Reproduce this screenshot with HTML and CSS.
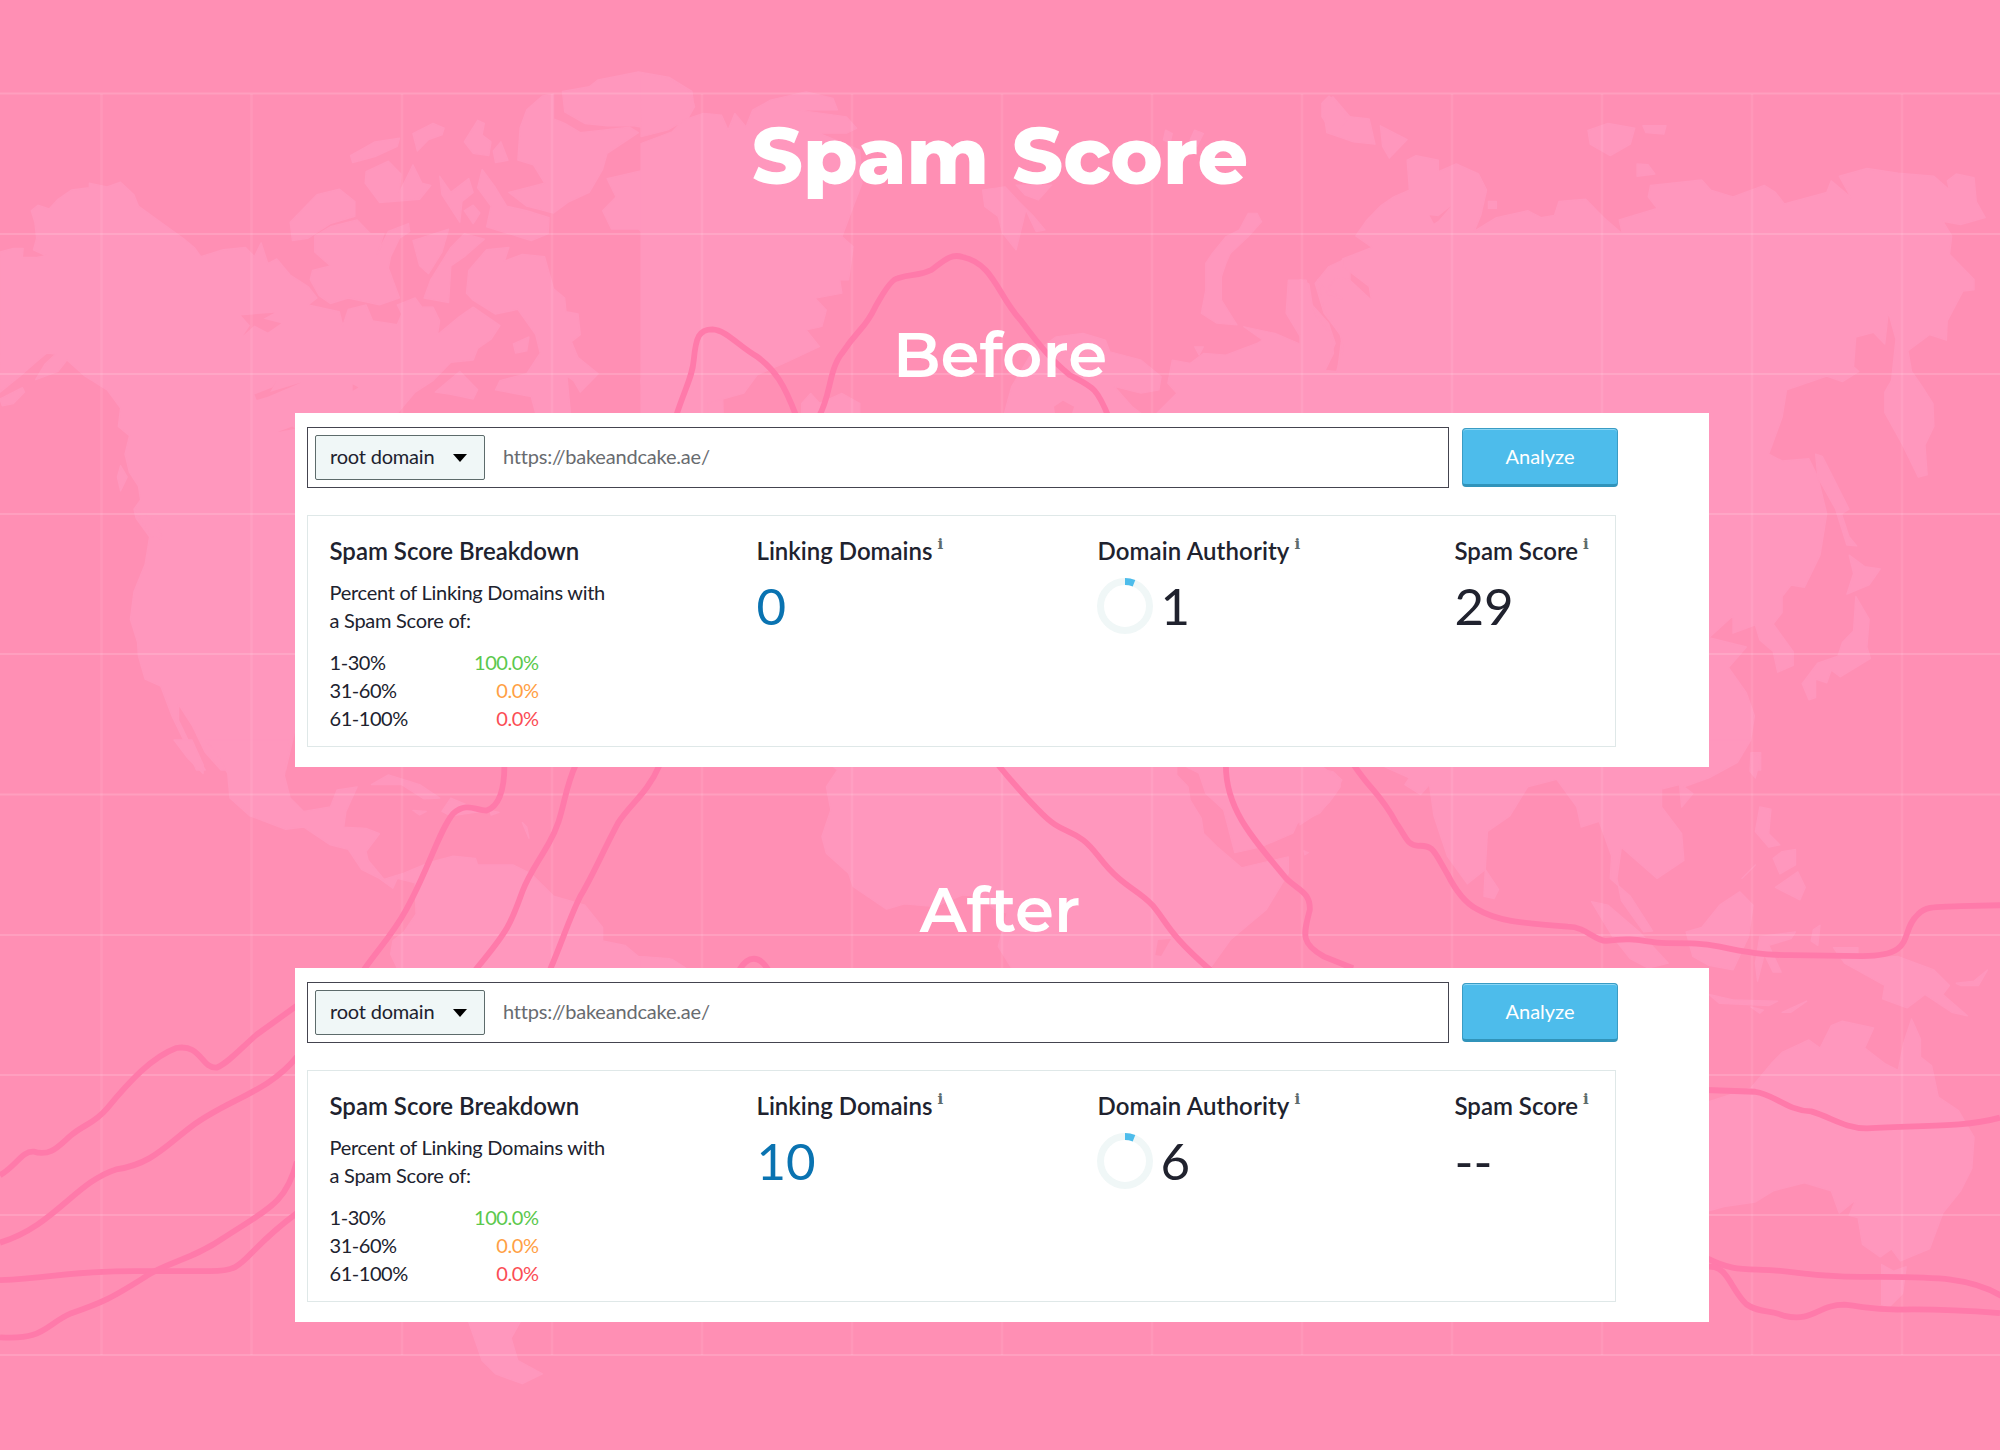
FILE: index.html
```html
<!DOCTYPE html>
<html lang="en">
<head>
<meta charset="utf-8">
<title>Spam Score</title>
<link rel="stylesheet" href="styles.css">
</head>
<body>
<svg class="map" viewBox="0 0 2000 1450" aria-hidden="true">
  <!-- North America and the Arctic islands -->
  <g class="land" transform="translate(0 50) scale(.4464 .4592)">
    <path d="M0 440L30 432 52 432 50 452 80 452 103 448 75 435 82 410 78 375 70 350 85 338 110 346 130 325 160 305 200 300 200 290 240 298 270 288 300 315 310 340 360 375 410 410 435 430 450 450 500 435 550 430 570 450 585 420 600 465 620 455 650 490 690 515 710 540 690 555 760 570 768 600 780 565 820 555 835 590 890 598 900 575 890 555 930 540 945 560 970 560 985 590 980 620 1030 580 1060 560 1090 580 1120 600 1100 630 1070 650 1060 675 1010 680 970 720 930 745 890 791 700 791 700 1500 661 1480 640 1568 495 1568 460 1530 430 1470 400 1425 400 1460 430 1520 460 1568 440 1568 410 1500 385 1450 360 1385 325 1370 310 1320 308 1290 292 1240 300 1180 325 1120 335 1060 305 1020 300 1000 315 980 310 950 290 920 280 880 290 840 265 820 270 780 240 740 190 710 150 675 130 700 80 718 100 685 125 662 105 660 80 680 45 710 0 745Z"/>
    <path d="M0 760L50 735 55 745 30 770 5 775ZM270 905L285 930 270 960 263 930ZM303 1000L350 1025 365 1065 340 1060Z"/>
    <path d="M650 375L710 315 760 303 795 330 795 362 740 378 690 410 655 415Z"/>
    <path d="M705 405L740 385 800 370 830 400 860 400 845 445 870 395 915 378 918 395 895 410 875 450 870 475 895 540 850 555 780 540 740 552 715 535 695 500 700 480 740 470 705 440Z"/>
    <path d="M785 230L840 200 895 192 890 210 840 232 790 245ZM820 265L870 242 898 270 895 310 925 250 945 290 965 295 940 325 850 332 818 290ZM925 182L970 160 995 170 990 185 960 195 935 220ZM1040 200L1070 153 1085 160 1080 185 1100 200 1095 230 1060 225ZM1105 220L1122 200 1138 240 1110 245ZM985 275L1010 310 1050 280 1060 310 1035 330 1030 375 990 315ZM1080 260L1110 300 1135 340 1180 350 1230 365 1228 400 1190 415 1090 385 1100 340 1070 300ZM1040 350L1060 338 1075 355 1060 378Z"/>
    <path d="M925 415L1005 390 990 440 960 487 940 470ZM1010 430L1040 400 1085 412 1040 450 1010 470 1005 550 950 540 965 500Z"/>
    <path d="M1045 530L1050 480 1090 435 1140 430 1130 460 1170 445 1220 450 1230 485 1240 520 1265 540 1268 570 1295 575 1300 620 1280 635 1295 670 1340 705 1300 745 1285 720 1270 710 1278 791 1200 791 1190 755 1110 740 1120 720 1180 705 1210 660 1200 620 1160 565 1110 575 1060 545ZM1150 640L1185 625 1180 655 1155 660ZM975 745L1030 700 1070 740 1060 760 1010 750Z"/>
    <path d="M1165 170L1180 130 1215 100 1240 96 1240 150 1265 160 1300 180 1410 168 1430 180 1360 225 1350 260 1320 310 1275 330 1240 355 1180 340 1140 310 1220 290 1195 250 1160 240Z"/>
    <path d="M1260 90L1320 80 1340 65 1430 48 1500 60 1550 90 1555 125 1500 155 1480 175 1420 165 1360 165 1310 160 1265 135Z"/>
    <path d="M1600 145L1568 145 1520 180 1450 225 1470 240 1440 262 1360 280 1380 320 1350 350 1370 390 1430 390 1465 420 1472 550 1490 570 1465 590 1495 625 1450 640 1490 660 1450 670 1435 720 1450 791 1620 791Z"/>
    <path class="sea" d="M540 578L615 572 590 585 630 595 600 615 570 600 545 622 560 600ZM570 750L610 735 620 720 605 745 675 724 600 755 575 762ZM622 832L655 820 661 825ZM790 728L803 735 790 742Z"/>
  </g>
  <!-- Greenland, Svalbard, Scandinavia -->
  <g class="land" transform="translate(650 50) scale(.4464 .3333)">
    <path d="M-20 70L40 85 90 130 100 170 85 205 40 240 -20 260ZM-20 280L50 245 75 210 120 190 160 195 175 240 190 190 215 230 230 180 270 150 350 125 410 145 420 180 330 180 440 200 463 235 440 250 380 250 470 300 475 400 455 470 430 560 455 590 445 690 425 690 430 730 370 745 395 780 385 830 350 840 380 890 300 940 240 975 210 1030 130 1060 130 1110 -20 1110Z"/>
    <path d="M340 1060L360 1030 380 1060 430 1030 470 1060 470 1110 340 1110Z"/>
    <path d="M745 420L795 410 830 460 860 500 885 540 865 545 842 480 820 600 790 550 780 500 750 470ZM820 405L900 405 870 450 840 435ZM1155 240L1170 250 1165 280 1150 270ZM1220 240L1240 250 1225 290 1210 270Z"/>
    <path d="M1340 490L1360 490 1370 515 1340 560 1300 610 1290 640 1280 680 1280 750 1315 825 1270 820 1235 790 1245 720 1245 640 1260 610 1290 560 1320 540Z"/>
    <path d="M790 1110L810 1010 850 920 910 860 970 850 1020 870 1030 905 1100 930 1145 980 1140 1020 1100 1030 1040 1010 1080 1070 1120 1110 1180 1030 1160 1000 1170 930 1210 940 1240 910 1290 915 1360 880 1372 870 1330 830 1400 850 1470 890 1425 790 1430 690 1470 690 1480 760 1520 820 1535 880 1510 960 1540 965 1550 860 1510 790 1490 700 1520 650 1568 620 1568 1110ZM1220 890L1240 890 1230 915ZM1505 160L1530 140 1568 200 1568 230 1530 250 1505 200Z"/>
    <path class="sea" d="M905 1070L925 1052 950 1070 940 1110 910 1110Z"/>
  </g>
  <!-- Asia -->
  <g class="land" transform="translate(1300 50) scale(.4464 .4592)">
    <path d="M0 500L20 510 30 570 70 620 75 660 55 700 82 700 97 650 90 620 55 570 40 500 65 535 95 542 62 520 80 495 110 500 160 545 155 515 95 470 95 455 162 430 125 405 150 370 180 340 210 320 245 305 240 240 260 230 310 240 310 265 350 248 400 270 418 305 405 360 390 395 440 365 510 350 540 365 570 360 580 330 640 325 680 365 722 400 715 370 800 345 780 320 785 295 900 283 920 305 970 320 1040 295 1065 310 1085 335 1180 310 1190 285 1235 322 1208 275 1270 258 1340 268 1420 275 1455 305 1450 285 1470 270 1510 278 1515 330 1535 365 1480 380 1440 373 1460 405 1455 445 1510 500 1510 522 1485 525 1450 590 1448 632 1410 620 1362 655 1370 700 1395 735 1418 770 1420 820 1400 860 1405 925 1385 930 1350 860 1310 790 1310 745 1325 720 1335 630 1318 570 1310 640 1285 615 1245 625 1240 690 1252 700 1215 722 1180 710 1090 740 1080 800 1050 880 1080 895 1140 890 1160 930 1180 1010 1165 1100 1130 1170 1100 1165 1080 1190 1080 1225 1060 1250 1105 1310 1105 1340 1070 1355 1060 1310 1030 1285 1020 1252 970 1270 970 1232 916 1280 1000 1300 960 1345 1000 1400 1018 1450 1010 1500 980 1540 940 1568 880 1568 880 791 0 791Z"/>
    <path d="M50 115L65 100 105 145 90 170 110 145 155 150 168 205 120 200 60 180ZM180 165L240 195 200 235 185 210ZM645 175L690 160 750 170 740 205 695 230 650 205ZM768 165L820 165 815 183 775 180ZM755 248L780 250 795 270 755 275ZM422 330L440 330 440 345 422 345Z"/>
    <path d="M1155 880L1170 885 1230 1000 1213 1010 1230 1060 1247 1080 1225 1078 1200 1000 1160 930ZM1230 1100L1265 1125 1300 1130 1275 1165 1225 1185 1240 1140ZM1245 1190L1275 1240 1270 1300 1278 1325 1210 1365 1190 1350 1180 1378 1155 1370 1155 1410 1140 1415 1125 1380 1160 1335 1205 1320 1215 1290 1240 1265ZM1010 1530L1032 1530 1032 1568 1010 1568Z"/>
    <path class="sea" d="M290 360L310 362 338 340 310 372 300 378Z"/>
  </g>
  <!-- Central and South America -->
  <g class="land" transform="translate(0 740) scale(.4464)">
    <path d="M460 0L485 30 510 75 515 130 560 170 640 200 680 195 740 235 780 245 810 290 850 310 880 332 890 310 930 320 932 390 905 430 880 450 875 480 890 511 1530 511 1500 490 1430 485 1400 460 1350 450 1350 420 1310 370 1240 350 1190 300 1150 280 1070 280 1065 265 1015 260 960 275 905 298 860 312 825 270 820 250 850 210 820 198 770 195 775 160 800 105 755 112 740 150 680 160 650 130 637 80 650 0ZM390 0L430 0 455 55 455 75 420 40Z"/>
    <path d="M832 100L870 78 940 100 985 130 950 132 900 100ZM925 158L955 160 940 168ZM990 160L1010 130 1080 160 1010 170ZM1098 158L1118 162 1100 168ZM1170 185L1180 195 1185 220ZM1050 1304L1165 1304 1145 1340 1160 1390 1215 1420 1170 1442 1110 1420 1080 1390Z"/>
  </g>
  <!-- Africa and Arabia -->
  <g class="land" transform="translate(650 750) scale(.4464 .3333)">
    <path d="M410 50L420 60 395 110 405 180 385 260 395 310 445 370 455 410 530 478 570 462 640 470 700 435 740 440 770 475 800 490 780 590 810 654 1255 654 1300 570 1380 480 1430 370 1430 320 1325 353 1270 290 1240 250 1235 205 1210 150 1205 110 1180 75 1180 50ZM1200 50L1230 70 1245 130 1285 180 1310 308 1370 290 1440 250 1450 220 1500 190 1530 140 1550 90 1530 65 1480 50ZM-20 620L50 628 80 654 -20 654ZM1465 302L1475 308 1467 315Z"/>
    <path class="sea" d="M1138 570L1167 567 1145 618 1132 615Z"/>
  </g>
  <!-- South Asia and Oceania -->
  <g class="land" transform="translate(1300 740) scale(.4464)">
    <path d="M50 60L90 90 90 105 65 140 30 170 0 190 0 60ZM190 60L245 85 235 100 270 122 290 100 300 170 330 260 375 322 415 290 420 205 470 170 510 105 575 88 620 150 630 195 670 182 698 260 695 310 740 350 790 428 770 430 720 360 710 310 720 240 800 310 860 270 855 210 810 150 810 110 850 100 855 150 880 120 860 105 916 85 980 50 1010 0 900 0 900 60Z"/>
    <path d="M415 290L445 335 435 355 412 350ZM653 362L690 370 760 430 825 500 780 511 740 490 700 440ZM865 430L900 420 940 370 985 340 1015 370 1005 440 970 515 916 505 880 485ZM1030 150L1055 155 1050 210 1075 235 1050 240 1020 205ZM1010 30L1032 40 1020 85 1008 70ZM1060 265L1080 250 1110 245 1110 280 1075 300ZM1065 330L1115 295 1132 330 1120 358ZM990 310L1020 280 1000 300ZM1030 440L1110 430 1100 445 1050 460 1078 520 1060 520 1040 480 1025 540 1020 500ZM1150 425L1165 415 1160 460 1145 450ZM1195 465L1250 465 1250 490 1340 485 1420 515 1455 550 1440 570 1495 618 1460 610 1400 570 1360 600 1305 580 1310 550 1220 500ZM1470 545L1510 540 1540 515 1520 550 1480 550ZM916 570L970 582 1070 585 1050 595 940 590ZM1080 610L1135 585 1100 610ZM1010 598L1038 605 1030 612Z"/>
    <path d="M916 810L1010 780 1060 720 1080 700 1140 672 1165 690 1190 640 1215 630 1285 645 1265 690 1310 725 1340 740 1352 680 1370 625 1390 670 1390 710 1415 730 1430 800 1475 830 1510 890 1505 960 1480 1010 1440 1060 1410 1140 1345 1167 1325 1140 1300 1158 1260 1130 1250 1070 1230 1065 1245 1030 1208 1060 1190 1010 1130 992 1060 1010 1020 1035 950 1045 916 1055ZM1303 1175L1330 1190 1358 1180 1350 1240 1320 1270 1303 1265Z"/>
  </g>
  <path class="grid" d="M0 93.5H2000M0 234H2000M0 374H2000M0 514H2000M0 654H2000M0 794.500H2000M0 935H2000M0 1075H2000M0 1215H2000M0 1355H2000"/>
  <path class="grid grid-v" d="M101.500 94V1355M251.500 94V1355M402 94V1355M552 94V1355M702 94V1355M852 94V1355M1002 94V1355M1152 94V1355M1302 94V1355M1452 94V1355M1602 94V1355M1752 94V1355M1902 94V1355"/>
  <!-- trend lines -->
  <g class="trend" transform="translate(650 50) scale(.4464 .3333)">
    <path d="M58 1100C80 1010 95 980 98 930C103 860 110 838 140 838C170 840 200 890 240 920C280 960 300 1000 328 1100"/>
    <path d="M378 1100C405 1040 400 960 430 910C470 830 480 840 505 770Q540 685 555 685C590 670 600 680 630 660C660 630 675 610 700 621C770 640 780 740 830 810C880 900 900 930 940 975C990 1010 1000 1010 1027 1100"/>
  </g>
  <g class="trend" transform="translate(0 740) scale(.4464)">
    <path d="M1130 55C1130 120 1115 150 1090 158C1065 158 1045 138 1015 165C985 200 960 290 910 380C880 435 850 465 815 515"/>
    <path d="M1290 55C1260 120 1265 170 1230 230C1205 275 1185 300 1170 340C1145 410 1140 425 1065 515"/>
    <path d="M1478 55C1450 120 1415 140 1385 185C1350 250 1330 300 1300 350C1275 400 1260 450 1232 515"/>
    <path d="M0 975C35 955 50 920 75 922C115 935 135 905 160 885C190 860 210 860 240 825C290 765 340 710 395 690C450 680 450 735 485 734C510 725 540 690 575 660L665 595"/>
    <path d="M0 1126C120 1090 170 990 260 962C340 950 370 910 430 865C510 805 600 790 665 710"/>
    <path d="M0 1210C120 1206 140 1190 300 1190H470C560 1190 530 1160 665 1060"/>
    <path d="M0 1338C100 1345 100 1310 160 1284C230 1260 250 1250 320 1206C370 1170 430 1165 500 1116C600 1050 640 1040 665 945"/>
  </g>
  <g class="trend" transform="translate(650 750) scale(.4464 .3333)">
    <path d="M780 45C820 110 840 140 870 180C920 250 930 230 970 270C1000 300 1010 340 1050 385C1080 420 1100 430 1125 465C1160 520 1160 550 1255 660"/>
    <path d="M1290 45C1290 170 1340 250 1425 385C1450 420 1480 425 1478 480C1465 550 1455 580 1510 620L1575 655"/>
    <path d="M200 660C220 615 245 615 265 660"/>
  </g>
  <g class="trend" transform="translate(1300 740) scale(.4464)">
    <path d="M120 55C160 115 180 120 215 185C240 220 240 236 265 237C300 235 300 250 330 300C350 340 370 365 395 378C440 405 490 410 600 418C640 418 660 450 685 450C760 440 770 455 820 455C880 455 900 455 940 463C1000 476 1040 482 1100 482L1260 484C1385 484 1340 430 1385 390C1405 370 1430 375 1480 372L1575 370"/>
    <path d="M910 784L1020 788C1060 792 1090 830 1145 832C1190 845 1220 870 1270 870C1390 862 1480 870 1568 846"/>
    <path d="M910 1160C970 1190 990 1184 1060 1188C1120 1192 1130 1200 1220 1202C1390 1205 1490 1195 1572 1246"/>
    <path d="M910 1180C960 1175 960 1225 1000 1264C1030 1285 1050 1275 1085 1290C1150 1305 1160 1265 1220 1265C1280 1272 1280 1275 1340 1276C1420 1274 1490 1278 1568 1284"/>
  </g>
</svg>

<main class="page">
  <h1 class="title">Spam Score</h1>

  <h2 class="stage">Before</h2>
  <section class="card">
    <div class="search">
      <div class="field">
        <div class="select">root domain<svg class="caret" viewBox="0 0 14 8"><path d="M0 0H14L7 8Z"/></svg></div>
        <span class="url">https://bakeandcake.ae/</span>
      </div>
      <div class="button">Analyze</div>
    </div>
    <div class="panel">
      <div class="col">
        <h3>Spam Score Breakdown</h3>
        <p>Percent of Linking Domains with<br>a Spam Score of:</p>
        <dl class="breakdown">
          <dt>1-30%</dt><dd class="low">100.0%</dd>
          <dt>31-60%</dt><dd class="mid">0.0%</dd>
          <dt>61-100%</dt><dd class="high">0.0%</dd>
        </dl>
      </div>
      <div class="col">
        <h3>Linking Domains<span class="info">i</span></h3>
        <div class="value link">0</div>
      </div>
      <div class="col">
        <h3 class="authority">Domain Authority<span class="info">i</span></h3>
        <div class="value"><svg class="donut" viewBox="0 0 56 56"><circle cx="28" cy="28" r="24.500"/><path d="M28 3.500A24.500 24.500 0 0 1 37 5.210"/></svg>1</div>
      </div>
      <div class="col">
        <h3>Spam Score<span class="info">i</span></h3>
        <div class="value">29</div>
      </div>
    </div>
  </section>

  <h2 class="stage stage-after">After</h2>
  <section class="card">
    <div class="search">
      <div class="field">
        <div class="select">root domain<svg class="caret" viewBox="0 0 14 8"><path d="M0 0H14L7 8Z"/></svg></div>
        <span class="url">https://bakeandcake.ae/</span>
      </div>
      <div class="button">Analyze</div>
    </div>
    <div class="panel">
      <div class="col">
        <h3>Spam Score Breakdown</h3>
        <p>Percent of Linking Domains with<br>a Spam Score of:</p>
        <dl class="breakdown">
          <dt>1-30%</dt><dd class="low">100.0%</dd>
          <dt>31-60%</dt><dd class="mid">0.0%</dd>
          <dt>61-100%</dt><dd class="high">0.0%</dd>
        </dl>
      </div>
      <div class="col">
        <h3>Linking Domains<span class="info">i</span></h3>
        <div class="value link">10</div>
      </div>
      <div class="col">
        <h3 class="authority">Domain Authority<span class="info">i</span></h3>
        <div class="value"><svg class="donut" viewBox="0 0 56 56"><circle cx="28" cy="28" r="24.500"/><path d="M28 3.500A24.500 24.500 0 0 1 37 5.210"/></svg>6</div>
      </div>
      <div class="col">
        <h3>Spam Score<span class="info">i</span></h3>
        <div class="value">--</div>
      </div>
    </div>
  </section>
</main>
</body>
</html>
```
FILE: styles.css
```css
* { box-sizing: border-box; }
body {
  margin: 0;
  width: 2000px;
  height: 1450px;
  overflow: hidden;
  background: #ff8fb4;
  font-family: Lato, sans-serif;
  color: #20222e;
}
h1, h2, h3, p, dl, dd { margin: 0; }

/* decorative backdrop behind the content */
.map { position: absolute; left: 0; top: 0; width: 2000px; height: 1450px; }
.land { fill: #ff97bd; stroke: #ff97bd; stroke-width: 3; stroke-linejoin: round; }
.sea { fill: #ff8fb4; stroke: none; }
.grid { fill: none; stroke: #fff; stroke-opacity: .15; stroke-width: 2; }
.grid-v { stroke-opacity: .08; stroke-width: 2.5; }
.trend { fill: none; stroke: #ff7aaa; stroke-width: 5.8; }
.trend path { vector-effect: non-scaling-stroke; }

.page { position: relative; padding-top: 111px; }
.title, .stage { font-family: Montserrat, Inter, sans-serif; color: #fff; text-align: center; }
.title { height: 90px; line-height: 90px; font-size: 79px; font-weight: 800; }
.stage { height: 74px; line-height: 74px; margin: 116.600px 0 21.400px; font-size: 62.600px; font-weight: 600; }
.stage-after { margin: 105.600px 0 21.400px; }

.card { width: 1414px; height: 354px; margin-left: 295px; padding: 14px 12px; background: #fff; }
.search { display: flex; gap: 13px; height: 61px; }
.field {
  display: flex;
  align-items: center;
  width: 1142px;
  padding: 0 7px;
  border: 1.500px solid #44444f;
}
.select {
  display: flex;
  align-items: center;
  justify-content: space-between;
  width: 170px;
  height: 45px;
  padding: 0 17px 2px 14px;
  border: 1px solid #5d6b6b;
  border-radius: 2px;
  background: #f0f7f7;
  font-size: 20px;
  letter-spacing: -.2px;
}
.caret { width: 14px; height: 8px; margin-top: 3px; fill: #000; }
.url { margin-left: 18px; padding-bottom: 2px; font-size: 20px; letter-spacing: -.2px; color: #686b6f; }
.button {
  width: 156px;
  height: 59px;
  margin-top: 1px;
  border: 1px solid #3a9cc4;
  border-bottom: 3px solid #3093ba;
  border-radius: 4px;
  background: #4dbceb;
  box-shadow: inset 0 1px 0 #8ad6f5;
  color: #fff;
  font-size: 20px;
  line-height: 55px;
  text-align: center;
}

.panel {
  display: grid;
  grid-template-columns: 427px 341px 357px 1fr;
  width: 1309px;
  height: 232px;
  margin-top: 27px;
  padding: 19px 0 0 21.500px;
  border: 1px solid #dfe8e8;
}
h3 { height: 32px; font-size: 24px; font-weight: 600; line-height: 32px; white-space: nowrap; }
.authority { letter-spacing: .12px; }
.info {
  position: relative;
  top: -11px;
  margin-left: 5px;
  font: bold 15px/1 "DejaVu Serif", serif;
  color: #5d6b6b;
}
p { margin-top: 11px; font-size: 20px; letter-spacing: -.27px; line-height: 28px; }
.breakdown {
  display: grid;
  grid-template-columns: 100px 109px;
  margin-top: 14px;
  font-size: 20px;
  letter-spacing: -.45px;
  line-height: 28px;
}
dd { text-align: right; }
.low { color: #5bc84d; }
.mid { color: #ff9f45; }
.high { color: #fb4d55; }
.value { display: flex; align-items: center; height: 60px; margin-top: 9px; font-size: 51px; line-height: 60px; }
.link { color: #0a73b1; }
.donut { width: 56px; height: 56px; margin: 1px 8px 0 -1px; fill: none; stroke-width: 7; }
.donut circle { stroke: #f0f7f7; }
.donut path { stroke: #4dbceb; }
```
